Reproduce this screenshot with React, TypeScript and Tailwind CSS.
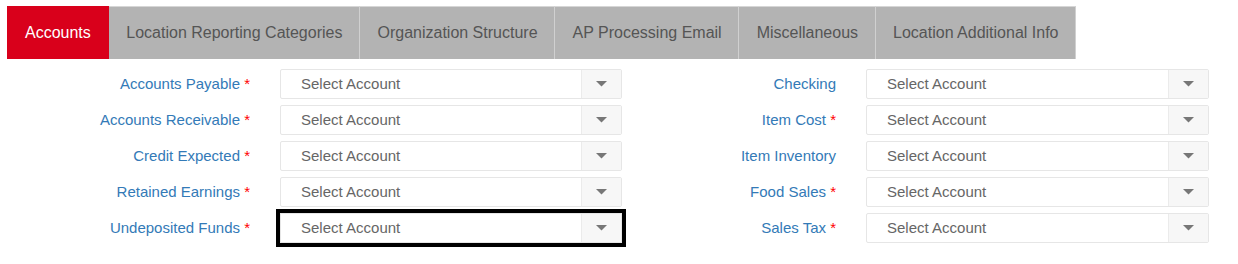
import React from "react";

const tabs = [
  "Accounts",
  "Location Reporting Categories",
  "Organization Structure",
  "AP Processing Email",
  "Miscellaneous",
  "Location Additional Info",
];

const left = [
  { label: "Accounts Payable", req: true },
  { label: "Accounts Receivable", req: true },
  { label: "Credit Expected", req: true },
  { label: "Retained Earnings", req: true },
  { label: "Undeposited Funds", req: true, focus: true },
];
const right = [
  { label: "Checking", req: false },
  { label: "Item Cost", req: true },
  { label: "Item Inventory", req: false },
  { label: "Food Sales", req: true },
  { label: "Sales Tax", req: true },
];

function Select({ focus, w }: { focus?: boolean; w: string }) {
  return (
    <div
      className={`flex h-[30px] ${w} border border-[#e6e6e6] bg-white ${
        focus ? "rounded-none outline-4 outline-black outline-solid" : "rounded-[2px]"
      }`}
    >
      <div className="flex flex-1 items-center pl-[20px] pt-[1px] text-[15px] text-[#666]">
        Select Account
      </div>
      <div className="flex w-[40px] items-center justify-center border-l border-[#ebebeb] bg-[#f7f7f7]">
        <svg width="11" height="6" viewBox="0 0 11 6">
          <path d="M0 0 H11 L5.5 5.5 Z" fill="#777" />
        </svg>
      </div>
    </div>
  );
}

function Label({ label, req, w }: { label: string; req: boolean; w: string }) {
  return (
    <div className={`${w} pt-[1px] text-right text-[15px] text-[#337ab7]`}>
      {label}
      {req && <span className="text-[#ff0000]"> *</span>}
    </div>
  );
}

export default function App() {
  return (
    <div
      className="h-[264px] w-[1238px] bg-white pl-[7px] pt-[6px]"
      style={{ fontFamily: '"Liberation Sans", Arial, sans-serif' }}
    >
      <div className="flex h-[53px]">
        {tabs.map((t, i) =>
          i === 0 ? (
            <div
              key={t}
              className="flex h-full items-center bg-[#d9001b] px-[18px] text-[16px] text-white"
            >
              {t}
            </div>
          ) : (
            <div
              key={t}
              className="flex h-full items-center border-t border-r border-t-[#d6d6d6] border-r-[#d0d0d0] bg-[#b3b3b3] pl-[17.5px] pr-[16.5px] text-[16px] text-[#555]"
            >
              {t}
            </div>
          )
        )}
      </div>
      <div className="mt-[10px] flex flex-col gap-[6px]">
        {left.map((l, i) => (
          <div key={l.label} className="flex items-center">
            <Label label={l.label} req={l.req} w="w-[243px]" />
            <div className="ml-[30px]">
              <Select focus={l.focus} w="w-[342px]" />
            </div>
            <Label label={right[i].label} req={right[i].req} w="w-[214px]" />
            <div className="ml-[30px]">
              <Select w="w-[343px]" />
            </div>
          </div>
        ))}
      </div>
    </div>
  );
}
